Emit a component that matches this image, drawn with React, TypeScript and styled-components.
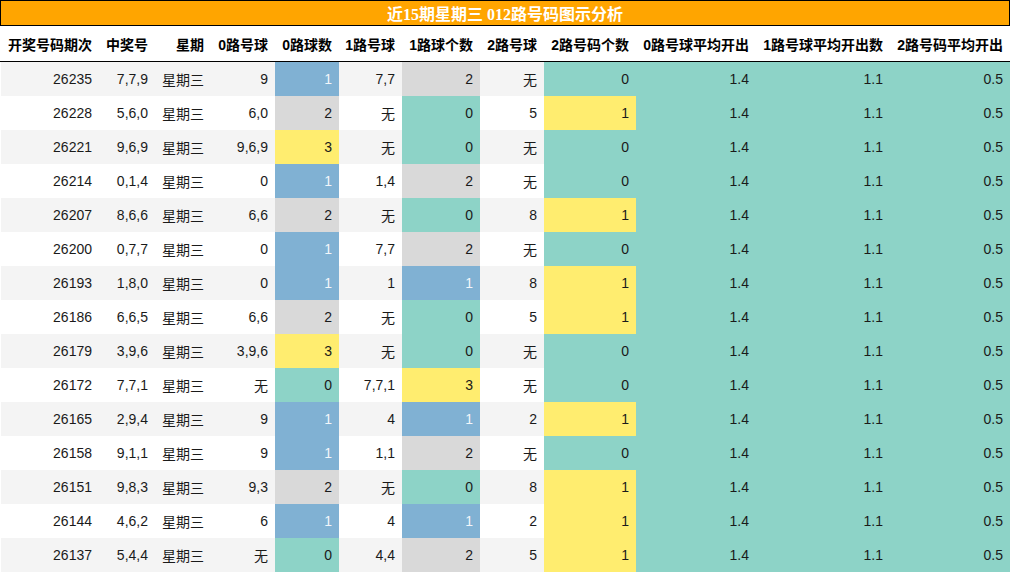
import React from "react";
import styled, { createGlobalStyle } from "styled-components";

const Global = createGlobalStyle`
  html, body { margin: 0; padding: 0; background: #fff; }
  body { font-family: "Liberation Sans", "Noto Sans CJK SC", sans-serif; }
`;

const COLS = [98, 56, 56, 64, 64, 63, 78, 64, 92, 120, 134, 120];
const grid = COLS.map((w) => `${w}px`).join(" ");

const Page = styled.div`
  width: 1010px;
  display: flex;
  flex-direction: column;
`;

const Title = styled.div`
  height: 24px;
  border: 1px solid #000;
  background: #ffa500;
  color: #fff;
  font-family: "Liberation Serif", "Noto Sans CJK SC", serif;
  font-weight: bold;
  font-size: 16px;
  display: flex;
  align-items: center;
  justify-content: center;
`;

const HeaderRow = styled.div`
  display: grid;
  grid-template-columns: ${grid};
  padding-left: 1px;
  height: 35px;
  border-bottom: 1px solid #000;
`;

const HeadCell = styled.div`
  display: flex;
  align-items: center;
  justify-content: flex-end;
  padding-right: 7px;
  font-size: 14px;
  font-weight: bold;
  color: #000;
  white-space: nowrap;
`;

const Row = styled.div<{ $alt: boolean }>`
  display: grid;
  grid-template-columns: ${grid};
  padding-left: 1px;
  height: 34px;
  background: #fff;
  & > div { background: ${(p) => (p.$alt ? "#f4f4f4" : "#ffffff")}; }
`;

type Tone = "teal" | "blue" | "gray" | "yellow" | undefined;
const toneBg: Record<string, string> = {
  teal: "#8dd3c7",
  blue: "#80b1d3",
  gray: "#d9d9d9",
  yellow: "#ffed6f",
};

const Cell = styled.div<{ $tone?: Tone }>`
  display: flex;
  align-items: center;
  justify-content: flex-end;
  padding-right: 7px;
  font-size: 14px;
  color: ${(p) => (p.$tone === "blue" ? "#f2f6fa" : "#1a1a1a")};
  white-space: nowrap;
  && { ${(p) => (p.$tone ? `background: ${toneBg[p.$tone]};` : "")} }
`;

const headers = [
  "开奖号码期次",
  "中奖号",
  "星期",
  "0路号球",
  "0路球数",
  "1路号球",
  "1路球个数",
  "2路号球",
  "2路号码个数",
  "0路号球平均开出",
  "1路号球平均开出数",
  "2路号码平均开出",
];

type R = [string, string, string, number, string, number, string, number];
const rows: R[] = [
  ["26235", "7,7,9", "9", 1, "7,7", 2, "无", 0],
  ["26228", "5,6,0", "6,0", 2, "无", 0, "5", 1],
  ["26221", "9,6,9", "9,6,9", 3, "无", 0, "无", 0],
  ["26214", "0,1,4", "0", 1, "1,4", 2, "无", 0],
  ["26207", "8,6,6", "6,6", 2, "无", 0, "8", 1],
  ["26200", "0,7,7", "0", 1, "7,7", 2, "无", 0],
  ["26193", "1,8,0", "0", 1, "1", 1, "8", 1],
  ["26186", "6,6,5", "6,6", 2, "无", 0, "5", 1],
  ["26179", "3,9,6", "3,9,6", 3, "无", 0, "无", 0],
  ["26172", "7,7,1", "无", 0, "7,7,1", 3, "无", 0],
  ["26165", "2,9,4", "9", 1, "4", 1, "2", 1],
  ["26158", "9,1,1", "9", 1, "1,1", 2, "无", 0],
  ["26151", "9,8,3", "9,3", 2, "无", 0, "8", 1],
  ["26144", "4,6,2", "6", 1, "4", 1, "2", 1],
  ["26137", "5,4,4", "无", 0, "4,4", 2, "5", 1],
];

const countTone = (n: number): Tone =>
  n === 0 ? "teal" : n === 1 ? "blue" : n === 2 ? "gray" : "yellow";
const twoTone = (n: number): Tone => (n === 0 ? "teal" : "yellow");

export default function App() {
  return (
    <Page>
      <Global />
      <Title>近15期星期三 012路号码图示分析</Title>
      <HeaderRow>
        {headers.map((h) => (
          <HeadCell key={h}>{h}</HeadCell>
        ))}
      </HeaderRow>
      {rows.map((r, i) => (
        <Row key={r[0]} $alt={i % 2 === 0}>
          <Cell>{r[0]}</Cell>
          <Cell>{r[1]}</Cell>
          <Cell>星期三</Cell>
          <Cell>{r[2]}</Cell>
          <Cell $tone={countTone(r[3])}>{r[3]}</Cell>
          <Cell>{r[4]}</Cell>
          <Cell $tone={countTone(r[5])}>{r[5]}</Cell>
          <Cell>{r[6]}</Cell>
          <Cell $tone={twoTone(r[7])}>{r[7]}</Cell>
          <Cell $tone="teal">1.4</Cell>
          <Cell $tone="teal">1.1</Cell>
          <Cell $tone="teal">0.5</Cell>
        </Row>
      ))}
    </Page>
  );
}
